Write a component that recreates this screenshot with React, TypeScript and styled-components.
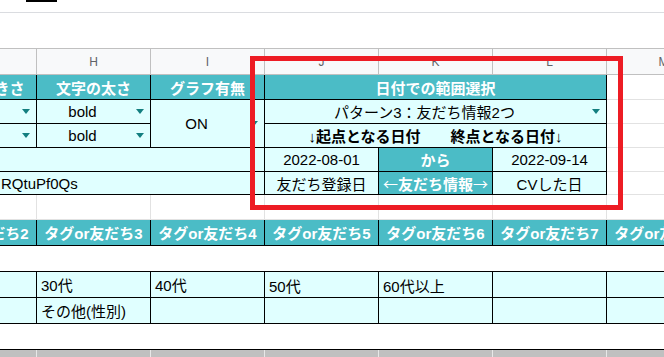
import React from 'react';
import styled, { createGlobalStyle, css } from 'styled-components';

const GlobalStyle = createGlobalStyle`
  html, body { margin: 0; padding: 0; background: #ffffff; }
  body { font-family: "Liberation Sans", "Noto Sans CJK JP", sans-serif; }
  #root { width: 664px; height: 357px; }
`;

const TEAL = '#4bbcc6';
const CYAN = '#e0ffff';
const GRID = '#e2e2e2';

type Tone = 'head' | 'teal' | 'cyan' | 'blank' | 'plain' | 'grey';

const Page = styled.div`
  position: relative;
  width: 664px;
  height: 357px;
  overflow: hidden;
  background: #ffffff;
`;

const TopBar = styled.div`
  height: 12px;
  border-bottom: 1px solid #dadce0;
  padding-left: 26px;
`;

const TopMark = styled.div`
  width: 31px;
  height: 2px;
  background: #000000;
`;

const FormulaArea = styled.div`
  height: 35px;
`;

const Sheet = styled.div`
  display: grid;
  margin-left: -77px;
  grid-template-columns: repeat(7, 114px);
  grid-template-rows: 26px 25px 24px 24px 24px 23px 25px 26px 26px 26px 26px 26px 26px;
  border-top: 1px solid #c0c0c0;
`;

const toneStyles: Record<Tone, ReturnType<typeof css>> = {
  head: css`
    background: #f8f9fa;
    color: #5f6368;
    font-size: 12px;
    border-right: 1px solid #c0c0c0;
    border-bottom: 1px solid #c0c0c0;
    justify-content: center;
  `,
  teal: css`
    background: ${TEAL};
    color: #ffffff;
    font-weight: bold;
    border-right: 1px solid #000000;
    border-bottom: 1px solid #000000;
    justify-content: center;
  `,
  cyan: css`
    background: ${CYAN};
    color: #000000;
    border-right: 1px solid #000000;
    border-bottom: 1px solid #000000;
  `,
  blank: css`
    background: #ffffff;
    border-right: 1px solid ${GRID};
    border-bottom: 1px solid ${GRID};
  `,
  plain: css`
    background: #ffffff;
    border-bottom: 1px solid #000000;
  `,
  grey: css`
    background: #c0c0c0;
    border-right: 1px solid #e8e8e8;
  `,
};

const Cell = styled.div<{
  $tone: Tone;
  $cs?: number;
  $rs?: number;
  $align?: 'left' | 'center';
  $valign?: 'middle' | 'bottom';
  $bold?: boolean;
  $indent?: number;
}>`
  box-sizing: border-box;
  display: flex;
  min-width: 0;
  overflow: hidden;
  white-space: nowrap;
  font-size: 15px;
  grid-column: span ${(p) => p.$cs ?? 1};
  grid-row: span ${(p) => p.$rs ?? 1};
  align-items: ${(p) => (p.$valign === 'bottom' ? 'flex-end' : 'center')};
  padding-bottom: ${(p) => (p.$valign === 'bottom' ? '1px' : '0')};
  ${(p) => toneStyles[p.$tone]}
  ${(p) =>
    p.$align === 'left'
      ? css`
          justify-content: flex-start;
          padding-left: ${p.$indent ?? 4}px;
        `
      : p.$tone === 'cyan'
      ? css`
          justify-content: center;
        `
      : ''}
  ${(p) =>
    p.$bold &&
    css`
      font-weight: bold;
    `}
`;

const WideArrow = styled.span`
  font-family: "Noto Sans CJK JP", sans-serif;
  font-weight: normal;
`;

const ChipText = styled.span`
  flex: 1;
  text-align: center;
  overflow: hidden;
`;

const Caret = styled.span`
  flex: none;
  width: 0;
  height: 0;
  margin: 0 6px 0 8px;
  border-left: 4px solid transparent;
  border-right: 4px solid transparent;
  border-top: 5px solid #137f80;
`;

const Highlight = styled.div`
  position: absolute;
  left: 250px;
  top: 56px;
  width: 373px;
  height: 154px;
  box-sizing: border-box;
  border: 5px solid #ed1c24;
  pointer-events: none;
`;

const Dropdown = ({ text, rs, cs }: { text: string; rs?: number; cs?: number }) => (
  <Cell $tone="cyan" $rs={rs} $cs={cs}>
    <ChipText>{text}</ChipText>
    <Caret />
  </Cell>
);

const letters = ['G', 'H', 'I', 'J', 'K', 'L', 'M'];
const tagCols = [2, 3, 4, 5, 6, 7, 8];

export default function App() {
  return (
    <>
      <GlobalStyle />
      <Page>
        <TopBar>
          <TopMark />
        </TopBar>
        <FormulaArea />
        <Sheet>
          {letters.map((l) => (
            <Cell key={l} $tone="head">
              {l}
            </Cell>
          ))}

          <Cell $tone="teal">文字の大きさ</Cell>
          <Cell $tone="teal">文字の太さ</Cell>
          <Cell $tone="teal">グラフ有無</Cell>
          <Cell $tone="teal" $cs={3}>日付での範囲選択</Cell>
          <Cell $tone="blank" />

          <Dropdown text="" />
          <Dropdown text="bold" />
          <Dropdown text="ON" rs={2} />
          <Dropdown text="パターン3：友だち情報2つ" cs={3} />
          <Cell $tone="blank" />

          <Dropdown text="" />
          <Dropdown text="bold" />
          <Cell $tone="cyan" $cs={3} $bold>
            ↓起点となる日付　　終点となる日付↓
          </Cell>
          <Cell $tone="blank" />

          <Cell $tone="cyan" $cs={3} />
          <Cell $tone="cyan">2022-08-01</Cell>
          <Cell $tone="teal">から</Cell>
          <Cell $tone="cyan">2022-09-14</Cell>
          <Cell $tone="blank" />

          <Cell $tone="cyan" $cs={3} $align="left" $indent={78}>
            RQtuPf0Qs
          </Cell>
          <Cell $tone="cyan">友だち登録日</Cell>
          <Cell $tone="teal">
            <WideArrow>←</WideArrow>友だち情報<WideArrow>→</WideArrow>
          </Cell>
          <Cell $tone="cyan">CVした日</Cell>
          <Cell $tone="blank" />

          {letters.map((l) => (
            <Cell key={`e-${l}`} $tone="blank" />
          ))}

          {tagCols.map((n) => (
            <Cell key={`t-${n}`} $tone="teal">
              タグor友だち{n}
            </Cell>
          ))}

          <Cell $tone="plain" $cs={7} />

          <Cell $tone="cyan" />
          <Cell $tone="cyan" $align="left">30代</Cell>
          <Cell $tone="cyan" $align="left">40代</Cell>
          <Cell $tone="cyan" $align="left" $valign="bottom">50代</Cell>
          <Cell $tone="cyan" $align="left" $valign="bottom">60代以上</Cell>
          <Cell $tone="cyan" />
          <Cell $tone="cyan" />

          <Cell $tone="cyan" />
          <Cell $tone="cyan" $align="left">その他(性別)</Cell>
          <Cell $tone="cyan" />
          <Cell $tone="cyan" />
          <Cell $tone="cyan" />
          <Cell $tone="cyan" />
          <Cell $tone="cyan" />

          <Cell $tone="plain" $cs={7} />

          {letters.map((l) => (
            <Cell key={`g-${l}`} $tone="grey" />
          ))}
        </Sheet>
        <Highlight />
      </Page>
    </>
  );
}
